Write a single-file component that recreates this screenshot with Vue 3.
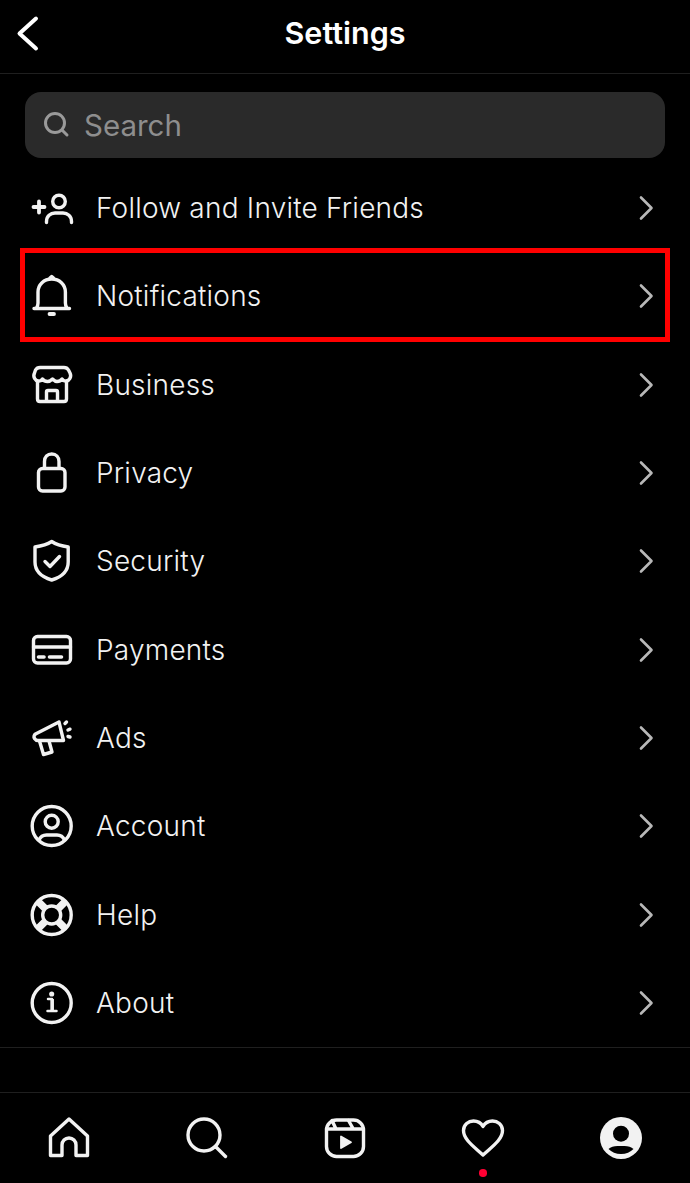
<template>
  <div class="page">
    <header class="top-bar">
      <svg class="back" width="48" height="66" viewBox="0 0 48 66" fill="none" stroke="#fff" stroke-width="4" stroke-linecap="round" stroke-linejoin="round">
        <path d="M36 18.5 19.5 33.5 36 48.5" />
      </svg>
      <span class="title">Settings</span>
    </header>

    <div class="search">
      <svg width="30" height="30" viewBox="0 0 30 30" fill="none" stroke="#9a9a9a" stroke-width="3" stroke-linecap="round">
        <circle cx="13" cy="13" r="9.500" />
        <path d="M20 20l5 5" />
      </svg>
      <span>Search</span>
    </div>

    <ul class="menu">
      <li v-for="item in menuItems" :key="item.label" class="row" :class="{ marked: item.label === 'Notifications' }">
        <svg class="icon" width="48" height="48" viewBox="0 0 48 48" fill="none" stroke="currentColor" stroke-width="3.4" stroke-linecap="round" stroke-linejoin="round" v-html="item.icon"></svg>
        <span class="label">{{ item.label }}</span>
        <svg class="chevron" width="24" height="28" viewBox="0 0 24 28" fill="none" stroke="#b8b8b8" stroke-width="2.6" stroke-linecap="round" stroke-linejoin="round">
          <path d="M7 3.500 17.500 14 7 24.500" />
        </svg>
      </li>
    </ul>

    <nav class="tabs">
      <div v-for="tab in tabs" :key="tab.name" class="tab">
        <svg width="48" height="48" viewBox="0 0 48 48" fill="none" stroke="currentColor" stroke-width="3.4" stroke-linecap="round" stroke-linejoin="round" v-html="tab.icon"></svg>
        <i v-if="tab.name === 'activity'" class="dot"></i>
      </div>
    </nav>
  </div>
</template>

<script setup>
const menuItems = [
  {
    label: 'Follow and Invite Friends',
    icon: '<path stroke-width="3.800" d="M5.500 23h11M11 17.500v11"/><circle cx="31" cy="17.500" r="6.300"/><path d="M18.500 38.500v-1c0-5.500 4-8.500 8.500-8.500h8c4.500 0 8.500 3 8.500 8.500v1"/>'
  },
  {
    label: 'Notifications',
    icon: '<path d="M6 36.500h35.500M8.500 36c1-1.500 1.500-3 1.500-5V20c0-7.500 6-13 13.700-13s13.700 5.500 13.700 13v11c0 2 .5 3.500 1.500 5"/><path stroke-width="3.800" d="M21.500 42h4.500"/><path d="M22 6l1.700-1.500L25.500 6"/>'
  },
  {
    label: 'Business',
    icon: '<path d="M12 6.500h24c2 0 3.500.8 4.500 2.500l1.500 3c2 4-1 7.500-3.500 8-2 .4-3.500-.4-4.500-2-1 1.500-3 2.500-5 2.500s-3-1-4.500-2.500c-1.500 1.500-3 2.500-5 2.500s-4-1-5-2.500c-1 1.600-2.500 2.400-4.500 2-2.500-.5-5.500-4-3.500-8L7.500 9c1-1.700 2.500-2.500 4.500-2.500z"/><path d="M9.500 20v18c0 1.500 1 2.500 2.500 2.500h24c1.500 0 2.500-1 2.500-2.500V20"/><path d="M18.500 40V31c0-1 .6-1.500 1.500-1.500h8c1 0 1.500.5 1.500 1.500v9"/>'
  },
  {
    label: 'Privacy',
    icon: '<rect x="10.500" y="19.500" width="26.500" height="22.500" rx="4"/><path d="M16.500 19v-6.500c0-4.500 3-7.500 7.300-7.500s7.200 3 7.200 7.500V19"/>'
  },
  {
    label: 'Security',
    icon: '<path d="M23.700 4.500c4.500 3 10 4.500 16.500 5.500v15c0 9-6.500 15-16.500 18C13.700 40 7 34 7 25V10c6.500-1 12-2.500 16.700-5.500z"/><path d="M17 24.500l5 5 9.500-10"/>'
  },
  {
    label: 'Payments',
    icon: '<rect x="5.500" y="10.500" width="37" height="26.500" rx="4"/><path d="M5.500 21h37"/><path stroke-width="3.600" d="M10.500 31h5.500M21.500 31h12"/>'
  },
  {
    label: 'Ads',
    icon: '<path d="M31 8 7.500 20c-1.500 1-2 3-1 4.500.8 1.200 2 2 3.500 2h25.500z"/><path d="M11.500 27l4 13.500 8.500-2.500-3-11"/><path d="M37 9.500l1.500-1.500M40 16l2-.8M40 22.500l2 .5"/>'
  },
  {
    label: 'Account',
    icon: '<circle cx="23.700" cy="24" r="19.500"/><circle cx="23.700" cy="19.700" r="6.500"/><path d="M11 38c1.500-3.500 4-5 7.500-5h10.500c3.500 0 6 1.500 7.500 5"/>'
  },
  {
    label: 'Help',
    icon: '<circle cx="23.700" cy="24" r="19.500"/><circle cx="23.700" cy="24" r="9"/><path stroke-width="7.500" stroke-linecap="butt" d="M10 10.300l7 7M37.400 10.300l-7 7M10 37.700l7-7M37.400 37.700l-7-7"/>'
  },
  {
    label: 'About',
    icon: '<circle cx="23.700" cy="24" r="19.500"/><circle cx="23.700" cy="15" r="1.800" fill="currentColor" stroke-width="1.500"/><path stroke-width="2.500" d="M20 20h4v11M19.500 32h9"/><path stroke-width="3.500" stroke-linecap="butt" d="M24.200 20v11"/>'
  }
]

const tabs = [
  {
    name: 'home',
    icon: '<path d="M5.500 41.500V22L24 5l18.500 17v19.500H31V31c0-4-3-7-7-7s-7 3-7 7v10.500z"/>'
  },
  {
    name: 'search',
    icon: '<circle cx="21" cy="21" r="16"/><path d="M33 33l9.500 9.500"/>'
  },
  {
    name: 'reels',
    icon: '<rect x="5.500" y="6" width="37" height="36.500" rx="10"/><path d="M5.500 15h37M11 6.500l4 8.500M27.500 6.500l4.800 8.500"/><path d="M20 22.500v11.500L30 28.200z" fill="currentColor" stroke-width="1.800"/>'
  },
  {
    name: 'activity',
    icon: '<path d="M24 41C16 33.500 4.500 26 4.500 16.500 4.500 10.500 9.500 7 14.500 7c4 0 7.500 2 9.500 5.500C26 9 29.500 7 33.500 7c5 0 10 3.500 10 9.500C43.500 26 32 33.500 24 41z"/>'
  },
  {
    name: 'profile',
    icon: '<circle cx="24" cy="24" r="21" fill="currentColor" stroke="none"/><circle cx="24" cy="19.700" r="8" fill="#000" stroke="none"/><path d="M11.500 35c2-2 5.500-3 9-3h7c3.500 0 7 1 9 3-3 3-7.500 5-12.500 5s-9.500-2-12.500-5z" fill="#000" stroke="none"/>'
  }
]
</script>

<style scoped>
.page {
  height: 1183px;
  display: flex;
  flex-direction: column;
  background: #000;
  color: #f2f2f2;
  font-family: Inter, "Liberation Sans", sans-serif;
  overflow: hidden;
}

.top-bar {
  position: relative;
  height: 74px;
  padding-bottom: 8px;
  box-sizing: border-box;
  flex-shrink: 0;
  display: flex;
  align-items: center;
  justify-content: center;
  border-bottom: 1px solid #1f1f1f;
}

.back {
  position: absolute;
  left: 0;
  top: 0;
}

.title {
  font-size: 30.5px;
  font-weight: 600;
  color: #fff;
}

.search {
  height: 66px;
  margin: 18px 25px 6px;
  padding-left: 17px;
  flex-shrink: 0;
  display: flex;
  align-items: center;
  gap: 12px;
  background: #2a2a2a;
  border-radius: 16px;
  font-size: 29.5px;
  color: #8e8e8e;
}

.menu {
  list-style: none;
  margin: 0;
  padding: 0;
  border-bottom: 1px solid #1f1f1f;
}

.row {
  position: relative;
  height: 88.3px;
  padding: 0 32px 0 28px;
  box-sizing: border-box;
  display: flex;
  align-items: center;
  gap: 20px;
}

.row.marked::after {
  content: '';
  position: absolute;
  left: 20px;
  right: 20px;
  top: -4px;
  bottom: -1px;
  border: 5px solid #f00;
  box-sizing: border-box;
}

.label {
  flex: 1;
  font-size: 28px;
  font-weight: 300;
  letter-spacing: 0.22px;
}

.tabs {
  margin-top: auto;
  height: 91px;
  padding-top: 21px;
  box-sizing: border-box;
  display: grid;
  grid-template-columns: repeat(5, 1fr);
  border-top: 1px solid #1f1f1f;
}

.tab {
  position: relative;
  display: flex;
  justify-content: center;
  align-items: flex-start;
}

.dot {
  position: absolute;
  left: 50%;
  top: 55px;
  width: 7.5px;
  height: 7.5px;
  margin-left: -3.75px;
  border-radius: 50%;
  background: #ff0033;
}
</style>
